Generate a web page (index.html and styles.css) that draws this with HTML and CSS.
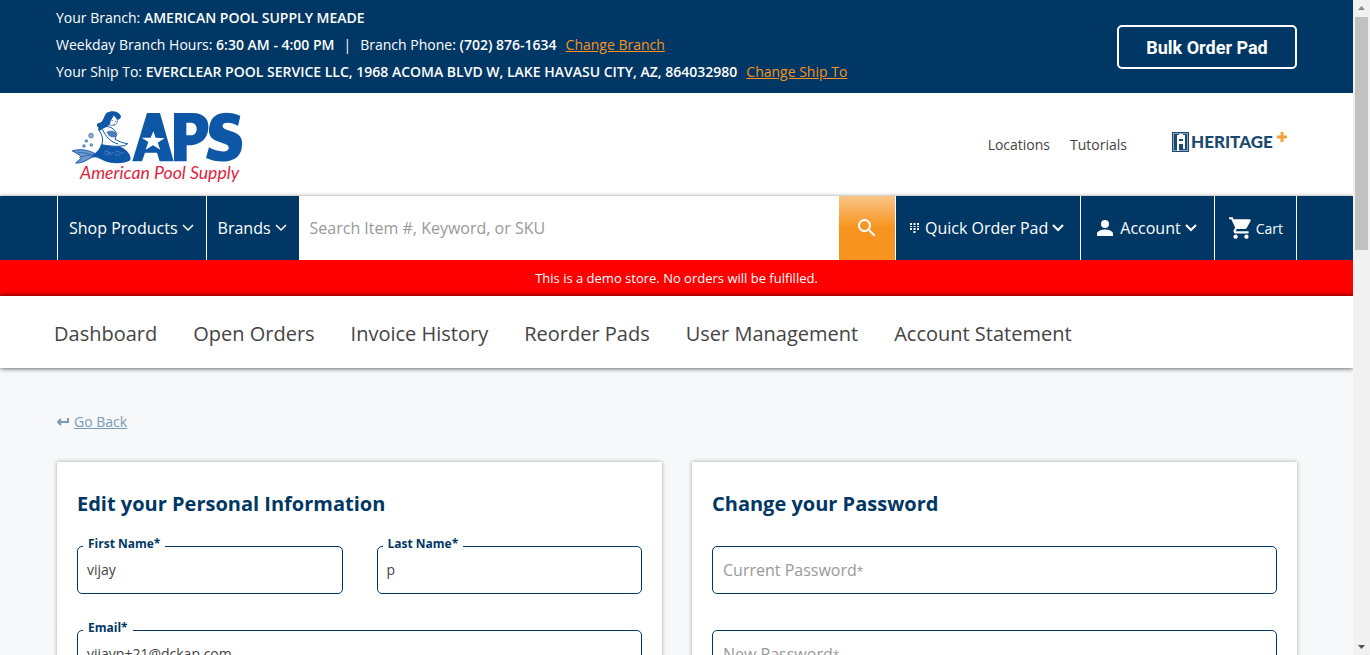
FILE: index.html
```html
<!DOCTYPE html>
<html lang="en">
<head>
<meta charset="utf-8">
<meta name="viewport" content="width=device-width, initial-scale=1">
<title>American Pool Supply - Account</title>
<link rel="stylesheet" href="styles.css">
</head>
<body>
<div class="viewport">
<div class="page">
  <div class="topbar">
    <div class="branch">
      <p class="branch-line">Your Branch: <strong>AMERICAN POOL SUPPLY MEADE</strong></p>
      <p class="branch-line">
        <span>Weekday Branch Hours: <strong>6:30 AM - 4:00 PM</strong></span>
        <span>|</span>
        <span>Branch Phone: <strong>(702) 876-1634</strong></span>
        <a href="#">Change Branch</a>
      </p>
      <p class="branch-line ship-line">
        <span>Your Ship To: <strong>EVERCLEAR POOL SERVICE LLC, 1968 ACOMA BLVD W, LAKE HAVASU CITY, AZ, 864032980</strong></span>
        <a href="#">Change Ship To</a>
      </p>
    </div>
    <button class="bulk" type="button">Bulk Order Pad</button>
  </div>

  <header class="header">
    <a class="logo" href="#" aria-label="American Pool Supply">
      <svg width="190" height="95" viewBox="0 0 570 285">
        <!-- tail fins -->
        <path d="M22 153C45 145 72 150 92 162C84 169 80 171 78 173C58 186 44 190 32 189L50 173C42 163 34 158 22 153Z" fill="#6f96cf" stroke="#1759a7" stroke-width="3"/>
        <path d="M42 173C60 165 78 166 91 164M37 157C56 156 70 162 82 166" fill="none" stroke="#1759a7" stroke-width="2"/>
        <!-- tail -->
        <path d="M108 133C125 133 140 138 158 137C180 143 202 164 196 181C180 192 140 192 120 184C103 177 95 168 76 174C90 160 104 151 108 133Z" fill="#0d57a6"/>
        <path d="M118 157q7-8 14 0t14 0M122 164q7-6 14 0M150 157q7-8 14 0t12 0M150 166q7-5 14 0" fill="none" stroke="#6f96cf" stroke-width="2"/>
        <!-- body and arms -->
        <path d="M110 134C116 119 112 105 102 91C106 82 118 78 130 80C142 82 152 91 155 103L150 118C160 123 170 129 188 131L179 137L158 139C148 139 122 137 110 134Z" fill="#fff" stroke="#0d57a6" stroke-width="3"/>
        <path d="M112 88C124 111 136 126 160 132" fill="none" stroke="#0d57a6" stroke-width="3"/>
        <path d="M124 96C134 91 146 91 154 98L153 111C145 113 137 111 132 108Z" fill="#477dbd"/>
        <!-- head and hair -->
        <path d="M133 45C147 44 158 53 157 66C154 76 144 79 134 75Z" fill="#fff" stroke="#0d57a6" stroke-width="2"/>
        <path d="M124 39C142 29 161 34 168 48C169 54 163 58 159 60C154 56 150 48 146 46C142 60 134 61 136 70C132 79 119 83 111 88C105 95 96 92 101 83C92 77 96 68 104 68C115 66 115 51 124 39Z" fill="#0d57a6"/>
        <path d="M139 63l6-2M149 65l5-1M143 72l7 1" stroke="#0d57a6" stroke-width="2"/>
        <!-- bubbles -->
        <g fill="#8fadd8" stroke="#2a66b0" stroke-width="2">
          <circle cx="78" cy="107" r="7"/><circle cx="64" cy="123" r="4"/><circle cx="79" cy="135" r="4"/><circle cx="57" cy="138" r="4"/>
        </g>
        <!-- wordmark -->
        <path d="M246 39H285L326 184H284L276 158H240L231 184H202Z" fill="#0d57a6"/>
        <path d="M265 94L272 113L299 115L278 128L286 149L264 136L242 149L250 126L230 113L257 113Z" fill="#fff"/>
        <path fill-rule="evenodd" d="M327 39H382C419 39 436 61 429 93C423 123 400 137 365 136V184H327ZM364 68V106H379C400 105 401 69 379 68Z" fill="#0d57a6"/>
        <path d="M526 48L519 78C501 68 477 64 473 76C470 89 495 91 512 99C533 109 534 130 529 149C520 188 466 193 423 174L432 142C452 154 485 161 491 146C495 131 467 130 450 121C430 110 430 93 434 76C441 34 489 31 526 48Z" fill="#0d57a6"/>
        <text class="logo-tag" x="45" y="236">American Pool Supply</text>
      </svg>
    </a>
    <nav class="header-links">
      <a href="#">Locations</a>
      <a href="#">Tutorials</a>
      <a class="heritage" href="#" aria-label="Heritage Plus">
        <svg width="118" height="24" viewBox="0 0 118 24">
          <rect x="1" y="2" width="17" height="20" fill="#1b4a70"/>
          <rect x="2.500" y="3.500" width="14" height="17" fill="none" stroke="#8fa8bb"/>
          <path d="M6 5H8V11H12V5H14V19H12V14H8V19H6Z" fill="#fff"/>
          <path d="M8 4H12V9H8ZM6 16H8V21H6Z" fill="#fff"/>
          <text class="heritage-text" x="20" y="18">HERITAGE</text>
          <path d="M111 2V12M106 7H116" stroke="#f6a040" stroke-width="3"/>
        </svg>
      </a>
    </nav>
  </header>

  <div class="mainnav">
    <button class="nav-item" type="button">Shop Products <svg class="chev" width="12" height="8" viewBox="0 0 12 8"><path d="M1 1L6 6L11 1"/></svg></button>
    <button class="nav-item" type="button">Brands <svg class="chev" width="12" height="8" viewBox="0 0 12 8"><path d="M1 1L6 6L11 1"/></svg></button>
    <form class="search">
      <input class="search-input" type="text" aria-label="Search" placeholder="Search Item #, Keyword, or SKU">
      <button class="search-btn" type="button" aria-label="Search">
        <svg width="24" height="24" viewBox="0 0 24 24"><path fill="#fff" d="M15.500 14h-.79l-.28-.27A6.500 6.500 0 1 0 13.730 14.430l.27.28v.79l5 4.990L20.490 19zM9.500 14A4.500 4.500 0 1 1 9.500 5a4.500 4.500 0 0 1 0 9z"/></svg>
      </button>
    </form>
    <button class="nav-item quick" type="button">
      <svg width="9" height="12" viewBox="0 0 9 12" fill="#fff"><path d="M0 1h2v2H0zM3.500 1h2v2h-2zM7 1h2v2H7zM0 4h2v1H0zM3.500 4h2v1h-2zM7 4h2v1H7zM0 6h2v2H0zM3.500 6h2v2h-2zM7 6h2v2H7zM3.500 9h2v2h-2z"/></svg>
      Quick Order Pad <svg class="chev bold" width="12" height="8" viewBox="0 0 12 8"><path d="M1 1L6 6L11 1"/></svg></button>
    <button class="nav-item account" type="button">
      <svg width="16" height="16" viewBox="0 0 16 16" fill="#fff"><circle cx="8" cy="4" r="4"/><path d="M0 16V13.500C0 11 5 9.500 8 9.500S16 11 16 13.500V16Z"/></svg>
      Account <svg class="chev bold" width="12" height="8" viewBox="0 0 12 8"><path d="M1 1L6 6L11 1"/></svg></button>
    <button class="nav-item cart" type="button">
      <svg width="26" height="26" viewBox="0 0 24 24"><path fill="#fff" d="M7 18c-1.100 0-1.990.9-1.990 2S5.900 22 7 22s2-.9 2-2-.9-2-2-2zM1 2v2h2l3.600 7.590-1.350 2.450c-.16.28-.25.61-.25.96 0 1.100.9 2 2 2h12v-2H7.420c-.14 0-.25-.11-.25-.25l.03-.12.9-1.630h7.450c.75 0 1.410-.41 1.750-1.030l3.580-6.490A1 1 0 0 0 20 4H5.210l-.94-2H1zm16 16c-1.100 0-1.990.9-1.990 2s.89 2 1.990 2 2-.9 2-2-.9-2-2-2z"/></svg>
      Cart</button>
  </div>

  <div class="notice">This is a demo store. No orders will be fulfilled.</div>

  <nav class="tabs">
    <a href="#">Dashboard</a>
    <a href="#">Open Orders</a>
    <a href="#">Invoice History</a>
    <a href="#">Reorder Pads</a>
    <a href="#">User Management</a>
    <a href="#">Account Statement</a>
  </nav>

  <main class="content">
    <div class="back">
      <svg width="12" height="8" viewBox="0 0 12 8"><path d="M11 0V4H1M4 1L1 4L4 7" fill="none" stroke="#7a9bb5" stroke-width="2"/></svg>
      <a href="#">Go Back</a>
    </div>
    <div class="cards">
      <section class="card">
        <h2>Edit your Personal Information</h2>
        <div class="row">
          <div class="field"><input id="first" type="text" value="vijay"><label for="first">First Name*</label></div>
          <div class="field"><input id="last" type="text" value="p"><label for="last">Last Name*</label></div>
        </div>
        <div class="row">
          <div class="field"><input id="email" type="text" value="vijayp+21@dckap.com"><label for="email">Email*</label></div>
        </div>
      </section>
      <section class="card">
        <h2>Change your Password</h2>
        <div class="row">
          <div class="field empty"><input id="current" type="password"><label for="current">Current Password<small>*</small></label></div>
        </div>
        <div class="row">
          <div class="field empty"><input id="new" type="password"><label for="new">New Password<small>*</small></label></div>
        </div>
      </section>
    </div>
  </main>
</div>
<div class="scrollbar">
  <svg width="17" height="17" viewBox="0 0 17 17"><path d="M5 10L8.500 6L12 10Z" fill="#8b8b8b"/></svg>
  <div class="track"><div class="thumb"></div></div>
  <svg width="17" height="17" viewBox="0 0 17 17"><path d="M5 7L8.500 11L12 7Z" fill="#505050"/></svg>
</div>
</div>
</body>
</html>
```

FILE: styles.css
```css
* { box-sizing: border-box; }

body {
  margin: 0;
  font-family: "Open Sans", "Noto Sans", sans-serif;
  font-size: 14px;
  color: #444;
}

button, input { font-family: inherit; }
button { cursor: pointer; }

.viewport {
  display: grid;
  grid-template-columns: minmax(0, 1fr) 17px;
  height: 100vh;
  overflow: hidden;
}

.page {
  overflow: hidden;
  background: #f6f8fa;
}

/* Branch bar */
.topbar {
  display: flex;
  justify-content: space-between;
  align-items: center;
  padding: 4px 56px 7px;
  background: #003764;
  color: #fff;
}

.branch-line {
  display: flex;
  gap: 9px;
  margin: 0;
  line-height: 27px;
  white-space: pre-wrap;
}
.branch-line:first-child { display: block; }
.branch-line strong { font-weight: 600; }
.branch-line a { color: #f7931e; }
.ship-line { line-height: 28px; }

.bulk {
  width: 180px;
  height: 44px;
  margin-top: 4px;
  border: 2px solid #fff;
  border-radius: 5px;
  background: transparent;
  color: #fff;
  font: 700 18px Roboto, sans-serif;
}

/* Logo row */
.header {
  display: flex;
  justify-content: space-between;
  align-items: center;
  height: 103px;
  padding: 0 64px 0 65px;
  background: #fff;
}
.logo { padding-top: 6px; }
.logo svg { display: block; }
.logo-tag {
  font: italic 400 53px Lato, sans-serif;
  fill: #df1f3d;
}
.header-links {
  display: flex;
  align-items: center;
  gap: 20px;
}
.header-links a { color: #444; text-decoration: none; }
.header-links .heritage { margin-left: 24px; padding-bottom: 6px; }
.heritage svg { display: block; }
.heritage-text { font: 900 17px Lato, sans-serif; fill: #1b4a70; }

/* Main navigation */
.mainnav {
  position: relative;
  display: flex;
  height: 64px;
  padding: 0 56px 0 57px;
  background: #003764;
  box-shadow: 0 0 4px rgba(0, 0, 0, .4);
}
.nav-item {
  display: flex;
  align-items: center;
  gap: 4px;
  padding: 0 12px 0 11px;
  border: 0;
  border-left: 1px solid #fff;
  background: transparent;
  color: #fff;
  font-size: 16px;
  white-space: nowrap;
}
.chev { fill: none; stroke: #fff; stroke-width: 1.5; }
.chev.bold { stroke-width: 2; }
.search { display: flex; flex: 1; min-width: 0; }
.search-input {
  flex: 1;
  min-width: 0;
  padding: 0 11px;
  border: 0;
  background: #fff;
  font-size: 16px;
}
.search-input::placeholder { color: #999; opacity: 1; }
.search-btn {
  display: grid;
  place-items: center;
  width: 56px;
  padding: 0;
  border: 0;
  background: linear-gradient(#fbc587, #f7931e 50%);
}
.quick { gap: 6px; padding: 0 16px 0 14px; }
.quick .chev { margin-left: -2px; }
.account { gap: 7px; padding: 0 17px 0 16px; }
.account .chev { margin-left: -3px; }
.cart {
  gap: 2px;
  padding: 0 13px;
  border-right: 1px solid #fff;
  font-size: 14px;
}

.notice {
  position: relative;
  padding: 8px;
  background: #f00;
  color: #fff;
  font-size: 13px;
  line-height: 20px;
  text-align: center;
}

.tabs {
  position: relative;
  display: flex;
  gap: 36px;
  padding: 22px 54px 18px;
  background: #fff;
  box-shadow: 0 0 5px rgba(0, 0, 0, .8);
  font-size: 20px;
  line-height: 32px;
}
.tabs a { color: #444; text-decoration: none; white-space: nowrap; }

/* Account forms */
.content { padding: 42px 56px 40px 57px; }
.back {
  display: flex;
  align-items: center;
  gap: 5px;
  margin-bottom: 28px;
  line-height: 24px;
}
.back a { color: #7a9bb5; }
.cards {
  display: grid;
  grid-template-columns: 1fr 1fr;
  gap: 30px;
}
.card {
  padding: 28px 20px 40px;
  background: #fff;
  box-shadow: 0 0 4px rgba(0, 0, 0, .35);
}
.card h2 {
  margin: 0 0 28px;
  color: #003764;
  font-size: 20px;
  font-weight: 700;
  line-height: 28px;
}
.row {
  display: flex;
  gap: 34px;
  margin-bottom: 36px;
}
.field { position: relative; flex: 1; min-width: 0; }
.field input {
  display: block;
  width: 100%;
  height: 48px;
  padding: 0 9px 2px;
  border: 1px solid #003764;
  border-radius: 5px;
  background: #fff;
  color: #444;
  font-size: 14px;
}
.field label {
  position: absolute;
  top: -10px;
  left: 6px;
  padding: 0 5px;
  background: #fff;
  color: #003764;
  font-size: 12px;
  font-weight: 700;
  line-height: 16px;
}
.field.empty label {
  top: 12px;
  color: #999;
  font-size: 16px;
  font-weight: 400;
  line-height: 24px;
}
.field small { font-size: 12px; }

/* Scrollbar */
.scrollbar {
  display: flex;
  flex-direction: column;
  background: #f1f1f1;
}
.scrollbar svg { display: block; }
.track { flex: 1; padding: 0 2px; }
.thumb { height: 37.5%; background: #c1c1c1; }
```
